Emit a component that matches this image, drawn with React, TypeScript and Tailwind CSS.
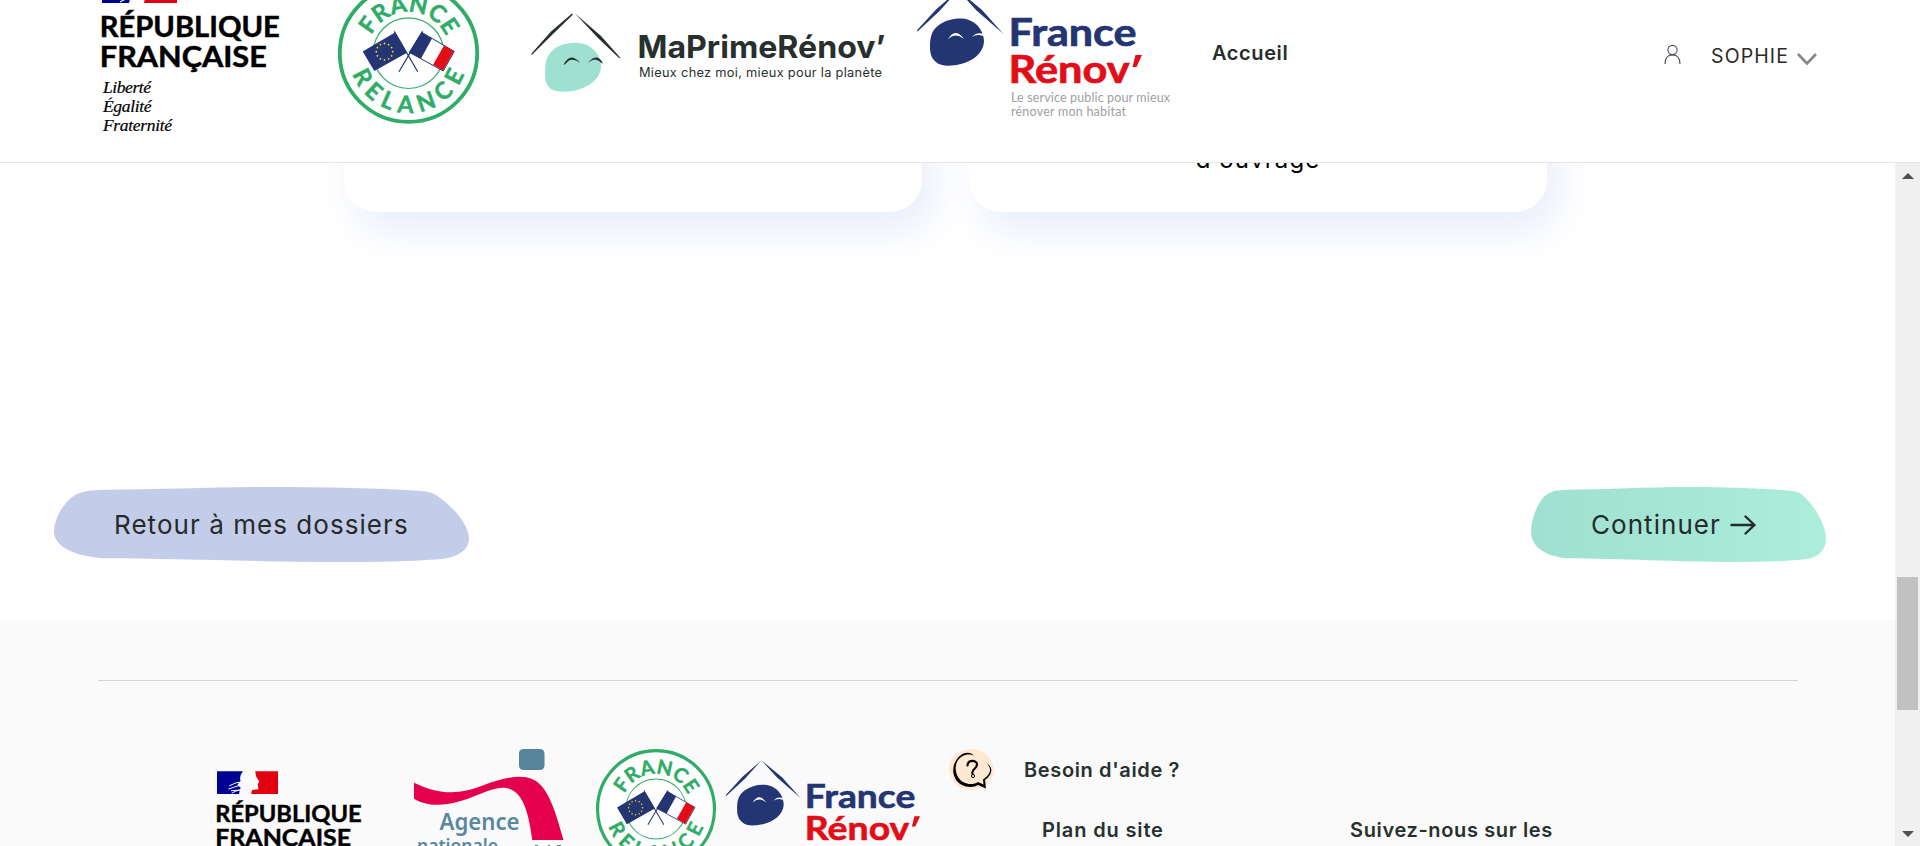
import React from "react";

function RepubliqueMark() {
  return (
    <g>
      <path d="M102-25h32q-5 6-3 12l-4 5 4 3-2 8h-27z" fill="#000091" />
      <path d="M149-25h28V3h-33l1-5 8-1-1-6 2-3-4-7z" fill="#e1000f" />
      <path d="M117-7q8-5 17-5M116-3q8-3 15-5M120 2q5-3 10-4M119-1l12-1" stroke="#fff" strokeWidth="1.2" fill="none" />
      <g fontFamily="Lato, sans-serif" fontWeight="700" fontSize="28" fill="#000" stroke="#000" strokeWidth=".5">
        <text x="99.800" y="37" textLength="180" lengthAdjust="spacingAndGlyphs">RÉPUBLIQUE</text>
        <text x="99.800" y="66.500" textLength="167" lengthAdjust="spacingAndGlyphs">FRANÇAISE</text>
      </g>
      <g fontFamily="'Liberation Serif', serif" fontStyle="italic" fontSize="17.5" fill="#000" stroke="#000" strokeWidth=".2">
        <text x="103" y="93" textLength="48">Liberté</text>
        <text x="103" y="112" textLength="48.500">Égalité</text>
        <text x="103" y="130.500" textLength="69">Fraternité</text>
      </g>
    </g>
  );
}

const stars = Array.from({ length: 12 }, (_, i) => {
  const a = (i * Math.PI) / 6;
  return [-24 + 8.2 * Math.cos(a), -1.5 + 8.2 * Math.sin(a)];
});

function RelanceMark({ id }: { id: string }) {
  return (
    <g>
      <circle r="68.700" fill="#fff" stroke="#2fac66" strokeWidth="3.800" />
      <circle r="35.300" fill="none" stroke="#2fac66" strokeWidth="1.200" />
      <path id={id + "a"} d="M-37-18A41.100 41.100 0 0 1 37.700-16.400" fill="none" />
      <path id={id + "b"} d="M-56 20.500A59.600 59.600 0 0 0 56 20.500" fill="none" />
      <g fontFamily="Lato, sans-serif" fontWeight="700" fontSize="23.500" fill="#2fac66" stroke="#2fac66" strokeWidth=".5">
        <text textLength="93"><textPath href={"#" + id + "a"}>FRANCE</textPath></text>
        <text textLength="145"><textPath href={"#" + id + "b"}>RELANCE</textPath></text>
      </g>
      <path d="M-45.800-1.800-13.500-20.800-1.500-.500-34.200 17.800z" fill="#243573" />
      <g fill="#f5e11b">{stars.map(([x, y], i) => <circle key={i} cx={x} cy={y} r=".9" />)}</g>
      <path d="M13.200-20.800 45.800-1.800 34.800 17.800.800-.800z" fill="#fff" stroke="#243573" />
      <path d="M13.200-20.800 23.500-14.800 12.500 5.400.800-.800z" fill="#243573" />
      <path d="M35.500-7.800 45.400-2 34.500 17.200 24.500 11.600z" fill="#e30d17" />
      <path d="M-14.200-21.800 9.200 18.500M14.200-21.800-9.500 18.500" stroke="#243573" strokeWidth="1.200" />
    </g>
  );
}

function FranceRenovMark() {
  return (
    <g>
      <g fill="#243573">
        <path d="M917 30.300 936 9.500 958-9.500 939 11.500 917.500 31.500z" />
        <path d="M958.500-9.500 982 10 1003.500 34 976 10z" />
        <path d="M930 47C930 36 932 30 939 25C947 19 960 17 969 20C979 24 984 33 984 42C983 54 972 61 961 64C952 66 941 67 936 62C931 58 930 53 930 47Z" />
      </g>
      <path d="M948 39.500Q955 27 964 39Q955 32 948 39.500ZM972 37Q977 31 984 34.500L983 36Q977 33.500 972 37Z" fill="#fff" />
      <g fontFamily="Lato, sans-serif" fontWeight="700" fontSize="38.500" strokeWidth=".7">
        <text x="1008.500" y="46" textLength="128" lengthAdjust="spacingAndGlyphs" fill="#243573" stroke="#243573">France</text>
        <text x="1008.500" y="82.500" textLength="121" lengthAdjust="spacingAndGlyphs" fill="#e30d17" stroke="#e30d17">Rénov</text>
      </g>
      <path d="M1135.500 55h6.500l-5.500 12h-4z" fill="#e30d17" />
      <g fontFamily="Lato, sans-serif" fontWeight="400" fontSize="12.500" fill="#a0a0a0">
        <text x="1011" y="101.700" textLength="159">Le service public pour mieux</text>
        <text x="1011" y="115.500" textLength="115">rénover mon habitat</text>
      </g>
    </g>
  );
}

function MaPrimeRenovLogo() {
  return (
    <svg viewBox="530 0 357 140" className="h-[140px] w-[357px] shrink-0 overflow-visible">
      <g fill="#27302d">
        <path d="M531.300 53.800 551 31.500 572 13.500Q573.500 13.500 572 15.500L554 33 531.800 55z" />
        <path d="M574.500 13 601 36 621 58.500 618.500 57.500 598 38z" />
      </g>
      <path d="M545 74C545 61 547 56 552 51C559 44 572 41.500 582 43.500C594 46 601 57 601 66C601 78 590 86 579 89.500C569 92.500 556 92.500 551 89C546 85.500 545 80 545 74Z" fill="#9fe1d0" />
      <path d="M563.500 65Q570 51 580.300 63Q571 56 565.500 64zM588 63Q597 52 603 63.500L601.500 63Q595 56 588 63Z" fill="#27302d" />
      <g fontFamily="Inter, sans-serif" fill="#27302d">
        <text x="637.500" y="57.700" fontSize="31.500" fontWeight="700" textLength="248" lengthAdjust="spacingAndGlyphs">MaPrimeRénov’</text>
        <text x="639" y="77.300" fontSize="12.800" textLength="243">Mieux chez moi, mieux pour la planète</text>
      </g>
    </svg>
  );
}

function Header() {
  return (
    <header className="relative z-10 flex h-[163px] shrink-0 items-start border-b border-[#e6e6e6] bg-white">
      <svg viewBox="98 0 185 140" className="ml-[98px] h-[140px] w-[185px] shrink-0">
        <RepubliqueMark />
      </svg>
      <svg viewBox="338 0 142 140" className="ml-[55px] h-[140px] w-[142px] shrink-0">
        <g transform="translate(408.500 53.200)"><RelanceMark id="h" /></g>
      </svg>
      <div className="ml-[50px] flex"><MaPrimeRenovLogo /></div>
      <svg viewBox="915 0 260 140" className="ml-[28px] h-[140px] w-[260px] shrink-0">
        <FranceRenovMark />
      </svg>
      <a className="ml-[37px] pt-[39px] text-[20px] leading-7 font-semibold tracking-[0.6px] text-[#262d2b]">Accueil</a>
      <div className="mr-[103px] ml-auto flex pt-[42px] text-[#2b2b2b]">
        <svg viewBox="0 0 18 21" className="mt-[2px] h-[21px] w-[18px]" fill="none" stroke="#4a4a55" strokeWidth="1.1">
          <circle cx="9.500" cy="6" r="4.600" />
          <path d="M2 20C2 14 5 11 9.500 11S17 14 17 20" />
        </svg>
        <span className="ml-[30px] text-[19.500px] leading-7 tracking-[1.1px]">SOPHIE</span>
        <svg viewBox="0 0 20 12" className="mt-[11px] ml-[8px] h-[12px] w-[20px]" fill="none" stroke="#858887" strokeWidth="2.600">
          <path d="M1 1 10 10.500 19 1" />
        </svg>
      </div>
    </header>
  );
}

function BlobButton({ children, className, from, to, id }: { children: React.ReactNode; className: string; from: string; to: string; id: string }) {
  return (
    <button className={"relative flex h-[75px] items-center text-[26px] tracking-[1.05px] whitespace-nowrap text-[#262a2a] " + className}>
      <svg viewBox="0 0 415 75" preserveAspectRatio="none" className="absolute inset-0 h-full w-full">
        <linearGradient id={id}><stop stopColor={from} /><stop offset="1" stopColor={to} /></linearGradient>
        <path fill={`url(#${id})`} d="M0 45C0 33 8 18 18 10C26 4 36 3 52 2.700C110 2.500 160 0 220 0C270 0 330 1.500 360 3.500C370 4 377 5 382 8C400 20 415 38 415 52C415 62 405 70 388 72C360 74.500 320 75 285 75C210 75 120 71.500 52 71.300C20 70 0 59 0 45Z" />
      </svg>
      <span className="relative flex items-center">{children}</span>
    </button>
  );
}

function Card({ children }: { children?: React.ReactNode }) {
  return (
    <div className="h-[112px] w-[578px] rounded-[32px] bg-white pt-[45px] text-center text-[24px] leading-[30px] tracking-[1.1px] text-black shadow-[12px_20px_40px_#eaeefb]">
      {children}
    </div>
  );
}

function HelpIcon() {
  return (
    <svg viewBox="947 748 46 43" className="h-[43px] w-[46px]">
      <path d="M948 767C949 756 959 749 970 749C982 749 992 758 992.500 769C993 782 982 790 970 790C957 790 948 780 948 767Z" fill="#fee8d3" />
      <path d="M972.500 756C971 752 964 752 960 755C953 760 950 770 954 778C958 787 971 789 977 785L985 788.500 984 780C991 775 993 768 986 763.500C991 769 990 774 982 779.500L982.500 784.500 977 782C971 786 961 784 957 777C953 769 954 761 961 756.500C965 754 970 754 972.500 756Z" fill="#000" />
      <path d="M966.500 765.500C967 759 976 760 976 764.500C976 769 970 769 971.500 774" fill="none" stroke="#000" strokeWidth="2.200" strokeLinecap="round" />
      <circle cx="972" cy="776" r="1.600" fill="none" stroke="#000" />
    </svg>
  );
}

function AnahLogo() {
  return (
    <svg viewBox="414 748 152 98" className="ml-[51px] h-[98px] w-[152px] shrink-0">
      <rect x="519" y="749" width="25.500" height="21" rx="4.500" fill="#55849c" />
      <path d="M414 782.700C441 796 462 794 484 785C503 778 520 774 532 779C549 786 556 814 563.500 840H532.300C529 815 524 796 512 790C498 782 478 797 457 802C441 806 426 806 414 798.700Z" fill="#e5004d" />
      <g fontFamily="'Noto Sans', sans-serif" fontWeight="600" fill="#5888a1">
        <text x="439.500" y="829.700" fontSize="23" textLength="80" lengthAdjust="spacingAndGlyphs">Agence</text>
        <text x="417" y="851.500" fontSize="18" textLength="81" lengthAdjust="spacingAndGlyphs">nationale</text>
      </g>
      <path d="M535 845.500h3M548 845.500h2M557 845.500h4" stroke="#777" />
    </svg>
  );
}

function Footer() {
  return (
    <footer className="flex min-h-0 flex-1 flex-col overflow-hidden bg-[#fafafa] px-[98px] pt-[60px]">
      <div className="mr-[-1px] h-px shrink-0 bg-[#d6d6d6]" />
      <div className="flex items-start pt-[67px] pl-[115px]">
        <svg viewBox="213 748 150 98" className="h-[98px] w-[150px] shrink-0">
          <g transform="translate(217 791.600) scale(.8136) translate(-102 0)"><RepubliqueMark /></g>
        </svg>
        <AnahLogo />
        <svg viewBox="594 748 124 98" className="ml-[28px] h-[98px] w-[124px] shrink-0">
          <g transform="translate(656 809) scale(.851)"><RelanceMark id="f" /></g>
        </svg>
        <svg viewBox="724 748 200 98" className="ml-[6px] h-[98px] w-[200px] shrink-0">
          <g transform="translate(807 808.700) scale(.863) translate(-1011 -46.300)"><FranceRenovMark /></g>
        </svg>
        <div className="ml-[24px] flex-1 text-[20px] leading-[28px] font-semibold tracking-[0.63px] text-[#27302f]">
          <div className="flex h-[60px] items-start">
            <HelpIcon />
            <span className="ml-[30px] pt-[8px]">Besoin d'aide ?</span>
          </div>
          <div className="flex pt-[8px] pl-[94px]">
            <span className="w-[308px] tracking-[0.85px]">Plan du site</span>
            <span>Suivez-nous sur les</span>
          </div>
        </div>
      </div>
    </footer>
  );
}

export default function App() {
  return (
    <div className="flex h-screen w-full flex-col overflow-hidden bg-white font-['Inter',sans-serif]">
      <Header />
      <div className="flex min-h-0 flex-1">
        <div className="flex min-w-0 flex-1 flex-col">
          <main className="flex h-[457px] shrink-0 flex-col">
            <div className="-mt-[63px] flex gap-[47px] pl-[344px]">
              <Card />
              <Card><p>d'ouvrage</p></Card>
            </div>
            <div className="mt-auto mb-[58px] flex justify-between pr-[69px] pl-[54px]">
              <BlobButton id="blue" from="#c3cdea" to="#c3cdea" className="w-[415px] pl-[60px]">Retour à mes dossiers</BlobButton>
              <BlobButton id="green" from="#9fe0d0" to="#abeed9" className="w-[295px] pl-[60px]">
                Continuer
                <svg viewBox="0 0 26 20" className="ml-[9px] h-[20px] w-[26px]" fill="none" stroke="#262a2a" strokeWidth="2.400" strokeLinecap="round" strokeLinejoin="round">
                  <path d="M1.500 10H24.500M15.500 1.500 24.500 10 15.500 18.500" />
                </svg>
              </BlobButton>
            </div>
          </main>
          <Footer />
        </div>
        <div className="flex w-[25px] shrink-0 flex-col items-center bg-[#f0f0f0]">
          <svg viewBox="0 0 12 6" className="mt-[10px] h-[6px] w-[12px]"><path d="M0 6 6 0 12 6z" fill="#505050" /></svg>
          <div className="mt-[398px] h-[133px] w-[21px] bg-[#c1c1c1]" />
          <svg viewBox="0 0 12 6" className="mt-auto mb-[9px] h-[6px] w-[12px]"><path d="M0 0h12L6 6z" fill="#505050" /></svg>
        </div>
      </div>
    </div>
  );
}
